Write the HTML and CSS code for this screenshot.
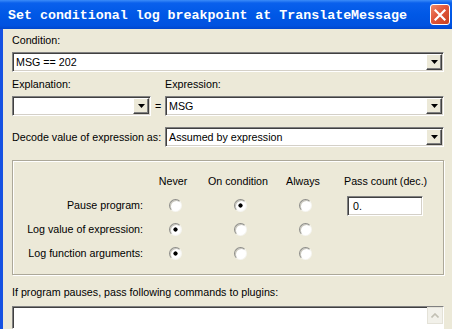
FILE: index.html
```html
<!DOCTYPE html>
<html lang="en">
<head>
<meta charset="UTF-8">
<title>Set conditional log breakpoint</title>
<link rel="stylesheet" href="styles.css">
</head>
<body>

<div class="window">
  <div class="titlebar">
    <span class="title">Set conditional log breakpoint at TranslateMessage</span>
    <span class="close">
      <svg width="12" height="12" viewBox="0 0 12 12"><path d="M1.5 1.5 L10.5 10.5 M10.5 1.5 L1.5 10.5" stroke="#fff" stroke-width="2.2" stroke-linecap="square"/></svg>
    </span>
  </div>

  <div class="content">
    <div class="label">Condition:</div>
    <div class="combo">
      <span class="value">MSG == 202</span>
      <span class="drop"><svg width="7" height="4" viewBox="0 0 7 4"><path d="M0 0 H7 L3.5 4 Z" fill="#000"/></svg></span>
    </div>

    <div class="expr-row">
      <div class="field expl">
        <div class="label">Explanation:</div>
        <div class="combo">
          <span class="value"></span>
          <span class="drop"><svg width="7" height="4" viewBox="0 0 7 4"><path d="M0 0 H7 L3.5 4 Z" fill="#000"/></svg></span>
        </div>
      </div>
      <div class="eq">=</div>
      <div class="field expr">
        <div class="label">Expression:</div>
        <div class="combo">
          <span class="value">MSG</span>
          <span class="drop"><svg width="7" height="4" viewBox="0 0 7 4"><path d="M0 0 H7 L3.5 4 Z" fill="#000"/></svg></span>
        </div>
      </div>
    </div>

    <div class="decode-row">
      <div class="decode-label">Decode value of expression as:</div>
      <div class="combo">
        <span class="value">Assumed by expression</span>
        <span class="drop"><svg width="7" height="4" viewBox="0 0 7 4"><path d="M0 0 H7 L3.5 4 Z" fill="#000"/></svg></span>
      </div>
    </div>

    <div class="group">
      <div></div>
      <div class="head">Never</div>
      <div class="head">On condition</div>
      <div class="head">Always</div>
      <div class="head pass-head">Pass count (dec.)</div>

      <div class="row-label">Pause program:</div>
      <span class="radio"></span>
      <span class="radio checked"></span>
      <span class="radio"></span>
      <div class="edit">0.</div>

      <div class="row-label">Log value of expression:</div>
      <span class="radio checked"></span>
      <span class="radio"></span>
      <span class="radio"></span>
      <div></div>

      <div class="row-label">Log function arguments:</div>
      <span class="radio checked"></span>
      <span class="radio"></span>
      <span class="radio"></span>
      <div></div>
    </div>

    <div class="label plugins-label">If program pauses, pass following commands to plugins:</div>
    <div class="textarea">
      <span class="scroll-up"><svg width="8" height="5" viewBox="0 0 8 5"><path d="M0.5 4.5 L4 1 L7.5 4.5" fill="none" stroke="#C2C0B4" stroke-width="1.6"/></svg></span>
    </div>
  </div>
</div>

</body>
</html>
```

FILE: styles.css
```css
body {
  margin: 0;
  padding: 0;
  background-color: #ECE9D8;
}
.window {
  width: 452px;
  height: 329px;
  overflow: hidden;
  background-color: #ECE9D8;
  font-family: "Liberation Sans", Arial, sans-serif;
  font-size: 10.7px;
  color: #000;
}
.titlebar {
  height: 29px;
  box-sizing: border-box;
  display: flex;
  align-items: center;
  justify-content: space-between;
  padding: 0 2px 0 8px;
  background: linear-gradient(to bottom, #3C8CF8 0, #0A60EC 3px, #0058E6 50%, #0052E0 88%, #0046CC 100%);
}
.title {
  font-family: "Liberation Mono", "Courier New", monospace;
  font-weight: bold;
  font-size: 13.3px;
  color: #fff;
  white-space: nowrap;
  margin-top: 1px;
}
.close {
  width: 20px;
  height: 21px;
  box-sizing: border-box;
  border: 1px solid #fff;
  border-radius: 3px;
  background: linear-gradient(135deg, #F0896A 0, #E0563A 45%, #C8401F 100%);
  display: flex;
  align-items: center;
  justify-content: center;
}
.content {
  border-left: 3px solid #1652E2;
  height: 300px;
  box-sizing: border-box;
  padding: 5px 8px 0 9px;
  display: flex;
  flex-direction: column;
}
.label {
  line-height: 13px;
  white-space: nowrap;
}
.combo {
  height: 20px;
  box-sizing: border-box;
  display: flex;
  align-items: center;
  padding: 1px;
  background-color: #fff;
  border: 1px solid;
  border-color: #808080 #fff #fff #808080;
  box-shadow: inset 1px 1px 0 #404040, inset -1px -1px 0 #D4D0C8;
  margin-top: 5px;
}
.combo .value {
  flex: 1;
  padding-left: 2px;
  white-space: nowrap;
  overflow: hidden;
}
.drop {
  width: 16px;
  height: 16px;
  box-sizing: border-box;
  background-color: #ECE9D8;
  border: 1px solid;
  border-color: #fff #404040 #404040 #fff;
  box-shadow: inset -1px -1px 0 #808080;
  display: flex;
  align-items: center;
  justify-content: center;
}
.expr-row {
  display: flex;
  align-items: flex-end;
  margin-top: 6px;
}
.expl {
  width: 139px;
}
.eq {
  width: 14px;
  text-align: center;
  line-height: 20px;
}
.expr {
  flex: 1;
}
.decode-row {
  display: flex;
  align-items: center;
  margin-top: 11px;
}
.decode-label {
  width: 153px;
  white-space: nowrap;
}
.decode-row .combo {
  flex: 1;
  margin-top: 0;
}
.group {
  margin-top: 13px;
  border: 1px solid #ACA899;
  box-shadow: inset 1px 1px 0 #fff, 1px 1px 0 #fff;
  padding: 8px 0 9px;
  display: grid;
  grid-template-columns: 130px 60px 70px 60px 1fr;
  grid-auto-rows: 24px;
  align-items: center;
}
.head {
  text-align: center;
  white-space: nowrap;
}
.pass-head {
  text-align: left;
  padding-left: 11px;
}
.row-label {
  text-align: right;
  white-space: nowrap;
}
.radio {
  justify-self: center;
  margin-left: 4px;
  width: 13px;
  height: 13px;
  box-sizing: border-box;
  border-radius: 50%;
  border: 1px solid;
  border-color: #8E8E8A #F6F6F2 #F6F6F2 #8E8E8A;
  background: radial-gradient(circle at 65% 65%, #fff 0, #fff 55%, #F2F1EA 100%);
  box-shadow: inset 1px 1px 0 #C8C6BC;
}
.radio.checked {
  background: radial-gradient(circle, #000 0, #000 1.8px, #fff 2.4px, #fff 55%, #F2F1EA 100%);
}
.edit {
  margin-left: 14px;
  width: 76px;
  height: 20px;
  box-sizing: border-box;
  background-color: #fff;
  border: 1px solid;
  border-color: #808080 #fff #fff #808080;
  box-shadow: inset 1px 1px 0 #404040, inset -1px -1px 0 #D4D0C8;
  padding-left: 5px;
  line-height: 18px;
  margin-top: 2px;
}
.plugins-label {
  margin-top: 11px;
}
.textarea {
  margin-top: 7px;
  height: 40px;
  box-sizing: border-box;
  background-color: #fff;
  border: 1px solid;
  border-color: #808080 #fff #fff #808080;
  box-shadow: inset 1px 1px 0 #404040;
  display: flex;
  justify-content: flex-end;
  align-items: flex-start;
  padding: 0 0 0 1px;
}
.scroll-up {
  width: 16px;
  height: 17px;
  box-sizing: border-box;
  background-color: #F2F1EA;
  border: 1px solid #E4E2D8;
  display: flex;
  align-items: center;
  justify-content: center;
}
```
